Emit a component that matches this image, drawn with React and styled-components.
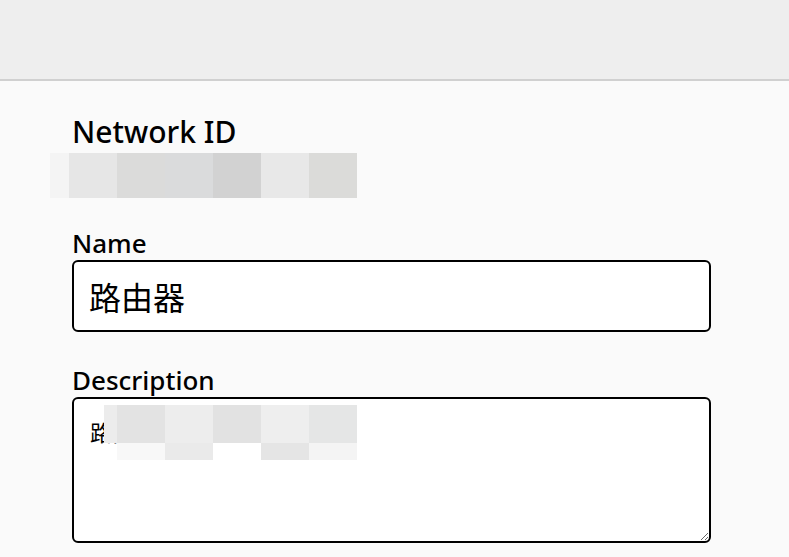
import styled, { createGlobalStyle } from "styled-components";

const Global = createGlobalStyle`
  html, body {
    margin: 0;
    padding: 0;
    background: #fafafa;
    font-family: "Noto Sans", "Noto Sans CJK SC", sans-serif;
    color: #000;
  }
`;

const idCells = [
  { w: 19, c: "#f4f4f4" },
  { w: 48, c: "#e6e6e6" },
  { w: 48, c: "#dbdbda" },
  { w: 48, c: "#dadbdc" },
  { w: 48, c: "#d2d2d2" },
  { w: 48, c: "#e8e8e8" },
  { w: 48, c: "#dbdbd9" },
];

const descTop = [
  { w: 13, c: "#ececec" },
  { w: 48, c: "#e3e3e3" },
  { w: 48, c: "#ededed" },
  { w: 48, c: "#e2e2e2" },
  { w: 48, c: "#eeeeee" },
  { w: 48, c: "#e5e6e6" },
];

const descBottom = [
  { w: 13, c: "transparent" },
  { w: 48, c: "#f8f8f8" },
  { w: 48, c: "#eaeaea" },
  { w: 48, c: "#ffffff" },
  { w: 48, c: "#e5e5e5" },
  { w: 48, c: "#f4f4f4" },
];

const App = () => {
  return (
    <Page>
      <Global />
      <TopBar />
      <Main>
        <Form>
          <Field $mb={30}>
            <BigLabel>Network ID</BigLabel>
            <Redact $offset={-22}>
              {idCells.map((cell, i) => (
                <Cell key={i} $w={cell.w} $h={45} $c={cell.c} />
              ))}
            </Redact>
          </Field>
          <Field $mb={33}>
            <Label>Name</Label>
            <Input type="text" defaultValue="路由器" />
          </Field>
          <Field $mb={0}>
            <Label>Description</Label>
            <AreaWrap>
              <TextArea defaultValue="路由器" />
              <Cover>
                <CoverRow>
                  {descTop.map((cell, i) => (
                    <Cell key={i} $w={cell.w} $h={38} $c={cell.c} />
                  ))}
                </CoverRow>
                <CoverRow>
                  {descBottom.map((cell, i) => (
                    <Cell key={i} $w={cell.w} $h={17} $c={cell.c} />
                  ))}
                </CoverRow>
              </Cover>
            </AreaWrap>
          </Field>
        </Form>
      </Main>
    </Page>
  );
};

const Page = styled.div`
  min-height: 557px;
  background: #fafafa;
`;

const TopBar = styled.header`
  height: 79px;
  background: #eeeeee;
  border-bottom: 2px solid #d0d0d0;
`;

const Main = styled.main`
  padding: 33px 0 0 72px;
`;

const Form = styled.div`
  width: 639px;
  display: flex;
  flex-direction: column;
`;

const Field = styled.div`
  display: flex;
  flex-direction: column;
  margin-bottom: ${(p) => p.$mb}px;
`;

const BigLabel = styled.div`
  font-size: 30px;
  line-height: 36px;
  font-weight: 500;
`;

const Label = styled.label`
  font-size: 26px;
  line-height: 30px;
  font-weight: 500;
  margin-bottom: 2px;
`;

const Redact = styled.div`
  display: flex;
  margin-left: ${(p) => p.$offset}px;
  margin-top: 3px;
`;

const Cell = styled.div`
  width: ${(p) => p.$w}px;
  height: ${(p) => p.$h}px;
  background: ${(p) => p.$c};
  flex-shrink: 0;
`;

const Input = styled.input`
  box-sizing: border-box;
  width: 100%;
  height: 72px;
  border: 2px solid #000;
  border-radius: 6px;
  background: #fff;
  padding: 0 15px;
  font-family: "Noto Sans CJK SC", sans-serif;
  font-size: 32px;
  color: #000;
  outline: none;
`;

const AreaWrap = styled.div`
  position: relative;
`;

const TextArea = styled.textarea`
  display: block;
  box-sizing: border-box;
  width: 100%;
  height: 146px;
  border: 2px solid #000;
  border-radius: 6px;
  background: #fff;
  padding: 16px 16px;
  font-family: "Liberation Serif", "Noto Sans CJK SC", serif;
  font-size: 22px;
  color: #000;
  outline: none;
`;

const Cover = styled.div`
  position: absolute;
  left: 32px;
  top: 8px;
  display: flex;
  flex-direction: column;
`;

const CoverRow = styled.div`
  display: flex;
`;

export default App;
